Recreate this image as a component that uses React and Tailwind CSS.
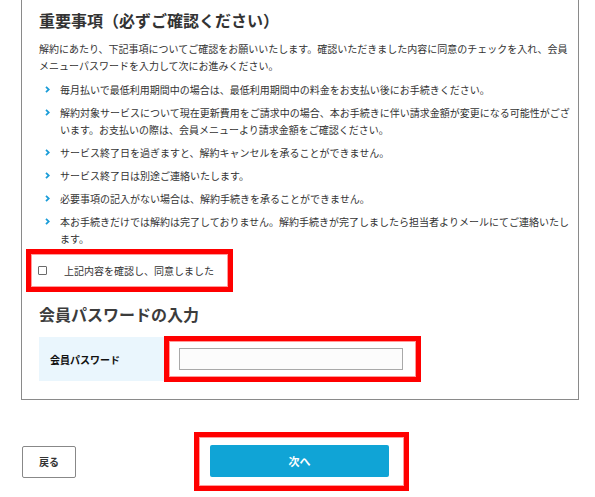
import React from "react";

const items = [
  "毎月払いで最低利用期間中の場合は、最低利用期間中の料金をお支払い後にお手続きください。",
  "解約対象サービスについて現在更新費用をご請求中の場合、本お手続きに伴い請求金額が変更になる可能性がございます。お支払いの際は、会員メニューより請求金額をご確認ください。",
  "サービス終了日を過ぎますと、解約キャンセルを承ることができません。",
  "サービス終了日は別途ご連絡いたします。",
  "必要事項の記入がない場合は、解約手続きを承ることができません。",
  "本お手続きだけでは解約は完了しておりません。解約手続きが完了しましたら担当者よりメールにてご連絡いたします。",
];

function Chevron() {
  return (
    <svg width="5" height="7" viewBox="0 0 5 7" className="mt-[5px] shrink-0">
      <polyline points="1,0.8 3.8,3.5 1,6.2" fill="none" stroke="#1a9cd8" strokeWidth="1.8" />
    </svg>
  );
}

export default function App() {
  return (
    <div
      className="w-[595px] h-[497px] bg-white text-[#333] overflow-hidden"
      style={{ fontFamily: '"Noto Sans CJK JP", "Noto Sans", sans-serif' }}
    >
      <div className="ml-[21px] w-[558px] border-x border-b border-[#8a8a8a] pt-[8px] pb-[17px] pl-[17px] pr-[4px]">
        <h2 className="text-[16px] leading-[24px] font-bold text-[#333]">重要事項（必ずご確認ください）</h2>
        <p className="mt-[8px] text-[10px] leading-[17px] pr-[4px]">
          解約にあたり、下記事項についてご確認をお願いいたします。確認いただきました内容に同意のチェックを入れ、会員メニューパスワードを入力して次にお進みください。
        </p>
        <ul className="mt-[7px] flex flex-col gap-[6px]">
          {items.map((t, i) => (
            <li key={i} className="flex gap-[10px] pl-[6px] text-[10px] leading-[17px]">
              <Chevron />
              <span>{t}</span>
            </li>
          ))}
        </ul>
        <div className="mt-[2px] -ml-[13px] w-[207px] h-[43px] border-[5px] border-[#ff0000] shadow-[inset_0_0_0_1px_#ff9c9c] flex items-center pl-[7px]">
          <span className="w-[9px] h-[9px] border border-[#6b6b6b] rounded-[1px] bg-white shrink-0" />
          <span className="ml-[17px] text-[10px] leading-[17px]">上記内容を確認し、同意しました</span>
        </div>
        <h2 className="mt-[10px] text-[16px] leading-[24px] font-bold text-[#3c3c3c]">会員パスワードの入力</h2>
        <div className="mt-[10px] flex items-center">
          <div className="w-[125px] h-[44px] bg-[#eaf6fd] flex items-center pl-[11px] text-[10px] font-bold text-[#111]">
            会員パスワード
          </div>
          <div className="w-[257px] h-[46px] border-[5px] border-[#ff0000] shadow-[inset_0_0_0_1px_#ff9c9c] flex items-center pl-[10px]">
            <div className="w-[224px] h-[22px] border border-[#a9a9a9] bg-[#fcfcfc]" />
          </div>
        </div>
      </div>
      <div className="ml-[21px] w-[561px] mt-[32px] grid grid-cols-[1fr_auto_1fr] items-center">
        <div className="justify-self-start ml-[1px] w-[54px] h-[32px] border border-[#888] rounded-[2px] flex items-center justify-center text-[10px] font-bold text-[#333]">
          戻る
        </div>
        <div className="border-[5px] border-[#ff0000] shadow-[inset_0_0_0_1px_#ff9c9c] pl-[11px] pr-[15px] pt-[8px] pb-[9px]">
          <div className="w-[179px] h-[32px] bg-[#10a4d6] rounded-[2px] flex items-center justify-center text-[11px] font-bold text-white">
            次へ
          </div>
        </div>
        <div />
      </div>
    </div>
  );
}
